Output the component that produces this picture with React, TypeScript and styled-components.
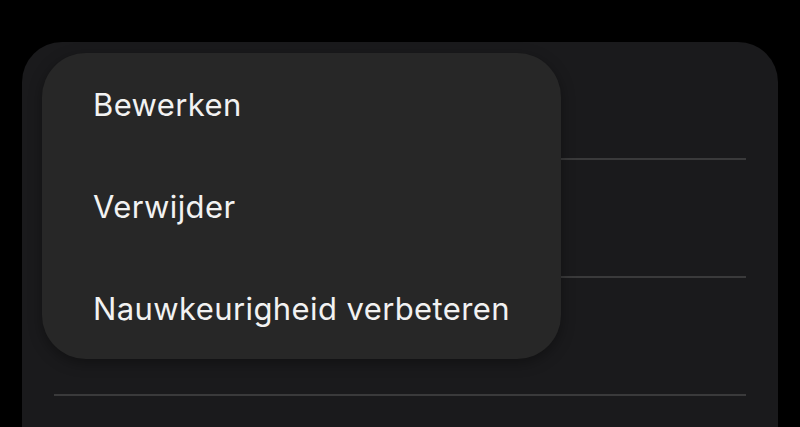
import React from 'react';
import styled, { createGlobalStyle } from 'styled-components';

const GlobalStyle = createGlobalStyle`
    html, body {
        margin: 0;
        background: #000;
        overflow: hidden;
    }
    body {
        font-family: Inter, Roboto, 'Noto Sans', sans-serif;
    }
`;

const Screen = styled.div`
    width: 800px;
    height: 427px;
    padding: 42px 22px 0;
    box-sizing: border-box;
    overflow: hidden;
`;

const Card = styled.section`
    position: relative;
    height: 420px;
    background: #1a1a1c;
    border-radius: 40px 40px 0 0;
    padding: 0 32px;
`;

const Row = styled.div`
    height: 116px;
    border-bottom: 2px solid #3a3a3b;
`;

const Menu = styled.ul`
    position: absolute;
    top: 11px;
    left: 20px;
    width: 519px;
    margin: 0;
    padding: 0;
    list-style: none;
    background: #272727;
    border-radius: 44px;
    box-shadow: 0 4px 14px rgba(0, 0, 0, 0.35);
`;

const MenuItem = styled.li`
    height: 102px;
    display: flex;
    align-items: center;
    padding-left: 51px;
    color: #f2f2f2;
    font-size: 31px;
    letter-spacing: 0.4px;
`;

const items = ['Bewerken', 'Verwijder', 'Nauwkeurigheid verbeteren'];

const App: React.FC = () => {
    return (
        <>
            <GlobalStyle />
            <Screen>
                <Card>
                    <Row />
                    <Row />
                    <Row />
                    <Menu>
                        {items.map((label) => (
                            <MenuItem key={label}>{label}</MenuItem>
                        ))}
                    </Menu>
                </Card>
            </Screen>
        </>
    );
};

export default App;
